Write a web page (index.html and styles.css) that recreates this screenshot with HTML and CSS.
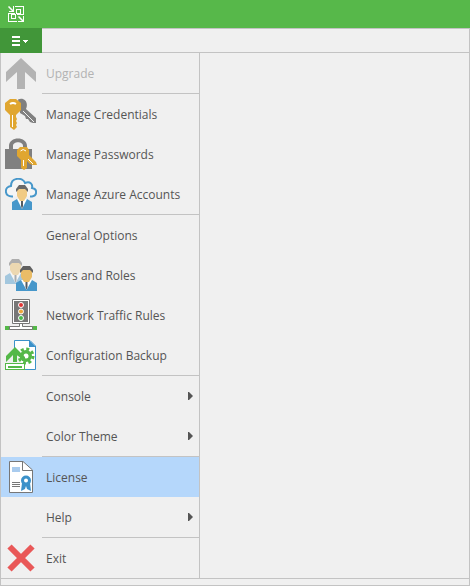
FILE: index.html
```html
<!DOCTYPE html>
<html lang="en">
<head>
<meta charset="utf-8">
<title>Console menu</title>
<link rel="stylesheet" href="styles.css">
</head>
<body>
<div class="window">
  <header class="titlebar">
    <svg class="logo" viewBox="0 0 16 16" fill="none" stroke="#fff" shape-rendering="crispEdges">
      <path d="M7 .5H15.500V9M.5 7V15.500H9M.5 7.500H7M15.500 8.500H9"/>
      <path d="M8.500 3.500h4v4h-4zM3.500 8.500h4v4h-4z"/>
      <path d="M.5 .5L5 5M10.500 10.500L15 15" shape-rendering="auto" stroke-width="1.500"/>
      <path d="M1 5.500H5.500V0M10 15.500H15.500V10"/>
    </svg>
  </header>
  <div class="toolbar">
    <button class="menu-button" type="button" aria-label="Main menu">
      <svg width="18" height="12" viewBox="0 0 18 12" fill="#fff" shape-rendering="crispEdges"><path d="M1 1h8v2H1zM1 5h8v2H1zM1 9h8v2H1zM12 5h5v1h-1v1h-1v1h-1V7h-1V6h-1z"/></svg>
    </button>
  </div>
  <main class="workspace">
    <nav class="menu">
      <button class="item" type="button" disabled>
        <svg class="icon" viewBox="0 0 32 32"><path d="M16 1L31 15V25L20 15V32H12V15L1 25V15z" fill="#b3b3b3"/></svg>
        <span class="label">Upgrade</span>
      </button>
      <hr class="rule">
      <button class="item" type="button">
        <svg class="icon" viewBox="0 0 32 32"><path d="M13 1.500C19-1 24 4 21 11L31 20V25H28L25 24L23 21H21L20 18L15 15z" fill="#808080"/><path d="M18 13L29 24" stroke="#f0f0f0"/><path d="M5 1H11L16 5V12L11 17V19L12 21L11 23L12 25L11 27L12 29L9 32L5 29V17L0 12V5z" fill="#e0a630"/><path d="M7.500 17V29" stroke="#fff"/><path d="M5 6Q8 4 11 6" stroke="#fff" stroke-width="2" fill="none"/></svg>
        <span class="label">Manage Credentials</span>
      </button>
      <button class="item" type="button">
        <svg class="icon" viewBox="0 0 32 32"><path d="M0 11H4V8C4-2 22-2 22 8V11H27V31H0zM8 11H18V8C18 3 8 3 8 8z" fill="#808080" fill-rule="evenodd"/><path d="M15 9H22L24 12V17L31 24L32 27L28 27L25 26L22 23V30L19 32L16 30V22L12 18V12z" fill="#e0a630"/><path d="M15.500 13Q18 10 21 13M18.500 22V28M23 21L28 26" stroke="#fff" fill="none"/></svg>
        <span class="label">Manage Passwords</span>
      </button>
      <button class="item" type="button">
        <svg class="icon" viewBox="0 0 32 32"><path d="M8 18.500H7C-1 18-1 9 6 8C6-1 18-1 20 5C25 3 28 6 27 10C33 11 32 18 27 18.500H25" fill="#fff" fill-opacity=".35" stroke="#4797ca" stroke-width="2"/><path d="M7 32V24L12 21H22L27 24V32z" fill="#4797ca"/><path d="M12 21L17 31L22 21z" fill="#fff"/><path d="M16 23h2v5l-1 3-1-3z" fill="#535b60"/><path d="M12 11L17 7L22 11V18L19 23H15L12 18z" fill="#f1cb84"/><path d="M11 14V11L14 7H20L23 11V14L20 11H14z" fill="#686868"/></svg>
        <span class="label">Manage Azure Accounts</span>
      </button>
      <hr class="rule">
      <button class="item" type="button">
        <span class="icon"></span><span class="label">General Options</span>
      </button>
      <button class="item" type="button">
        <svg class="icon" viewBox="0 0 32 32"><defs><g id="person"><path d="M0 25V17L5 14H16L21 17V25z" fill="#4797ca"/><path d="M5 14L10.500 24L16 14z" fill="#fff"/><path d="M9.500 16h2v5l-1 3-1-3z" fill="#535b60"/><path d="M5 4L10 0L16 4V11L13 16H8L5 11z" fill="#e9bc67"/><path d="M4 7V4L7 0H14L17 4V7L14 4H7z" fill="#606060"/></g></defs><use href="#person" opacity=".45"/><use href="#person" x="11" y="7"/></svg>
        <span class="label">Users and Roles</span>
      </button>
      <button class="item" type="button">
        <svg class="icon" viewBox="0 0 32 32"><path d="M0 27h32v4H0z" fill="#54b848"/><path d="M14.500 24v3.500h-10v3h23v-3h-10V24" fill="#fff" stroke="#777"/><path d="M7.500.5h17v24h-17z" fill="#fff" stroke="#777"/><path d="M9 2h14v21H9z" fill="#777"/><g stroke="#fff"><circle cx="16" cy="6" r="2.500" fill="#df3434"/><circle cx="16" cy="12.500" r="2.500" fill="#eba63a"/><circle cx="16" cy="19" r="2.500" fill="#49b84b"/></g></svg>
        <span class="label">Network Traffic Rules</span>
      </button>
      <button class="item" type="button">
        <svg class="icon" viewBox="0 0 32 32"><path d="M9.500 10V1.500H25L30.500 7V30.500H20" fill="#fff" stroke="#3b91c9"/><path d="M24 1V8H31z" fill="#3b91c9"/><circle cx="21" cy="17" r="6" fill="#54b848"/><circle cx="21" cy="17" r="7" fill="none" stroke="#54b848" stroke-width="3" stroke-dasharray="3 2.500"/><circle cx="21" cy="17" r="2.500" fill="#fff"/><path d="M10 8L20 18V23L12 16V23H8V16L1 23V17z" fill="#54b848"/><path d="M0 24h20v7H0z" fill="#54b848"/><path d="M1 25h18v5H1z" fill="#fff"/><path d="M3 27h14v2H3z" fill="#54b848"/></svg>
        <span class="label">Configuration Backup</span>
      </button>
      <hr class="rule">
      <button class="item" type="button">
        <span class="icon"></span><span class="label">Console</span><svg class="arrow" viewBox="0 0 5 8"><path d="M0 0H1L5 4L1 8H0z"/></svg>
      </button>
      <button class="item" type="button">
        <span class="icon"></span><span class="label">Color Theme</span><svg class="arrow" viewBox="0 0 5 8"><path d="M0 0H1L5 4L1 8H0z"/></svg>
      </button>
      <hr class="rule">
      <button class="item selected" type="button">
        <svg class="icon" viewBox="0 0 32 32"><path d="M4.500.5H18L27.500 9V31.500H4.500z" fill="#fff" stroke="#777"/><path d="M17.500.5V9.500H27.500" fill="none" stroke="#777"/><path d="M7 6h8v5H7z" fill="#a9cbee"/><path d="M7 21.500h8M7 23.500h8M7 25.500h8" stroke="#777"/><path d="M17 22L16 30L20 28L21 25L22 28L26 30L25 22z" fill="#3b91c9"/><circle cx="21" cy="19.500" r="3.500" fill="#fff" stroke="#3b91c9" stroke-width="3"/></svg>
        <span class="label">License</span>
      </button>
      <button class="item" type="button">
        <span class="icon"></span><span class="label">Help</span><svg class="arrow" viewBox="0 0 5 8"><path d="M0 0H1L5 4L1 8H0z"/></svg>
      </button>
      <hr class="rule">
      <button class="item" type="button">
        <svg class="icon" viewBox="0 0 32 32"><path d="M4.500 4.500L27.500 27.500M27.500 4.500L4.500 27.500" stroke="#e95858" stroke-width="6"/></svg>
        <span class="label">Exit</span>
      </button>
    </nav>
    <section class="content"></section>
  </main>
  <footer class="statusbar"></footer>
</div>
</body>
</html>
```
FILE: styles.css
```css
* { box-sizing: border-box; }
body { margin: 0; background: #f0f0f0; font: 12px/16px "Open Sans", "Noto Sans", sans-serif; color: #555; }
.window { min-height: 100vh; display: flex; flex-direction: column; }
.titlebar { height: 28px; padding: 6px 8px; background: #57b84a; }
.logo { display: block; width: 16px; height: 16px; }
.toolbar { height: 25px; display: flex; border: 1px solid #c3c3c3; border-left: 0; background: #f0f0f0; }
.menu-button { width: 42px; margin: -1px 0; padding: 0 2px 0 0; border: 0; background: #419639; display: flex; align-items: center; justify-content: center; }
.workspace { flex: 1; display: flex; border: 1px solid #c3c3c3; border-top: 0; }
.menu { width: 199px; border-right: 1px solid #c3c3c3; }
.item { display: flex; align-items: center; width: 100%; height: 40px; padding: 0 6px 0 4px; border: 0; background: none; font: inherit; color: inherit; text-align: left; }
.item:disabled { color: #b3b3b3; }
.item.selected { background: #b5d7fb; }
.icon { flex: none; width: 32px; height: 32px; margin-right: 9px; }
.label { flex: 1; padding-top: 2px; white-space: nowrap; }
.arrow { width: 5px; height: 8px; fill: #555; }
.rule { height: 1px; margin: 0 0 0 41px; border: 0; background: #c3c3c3; }
.content { flex: 1; }
.statusbar { height: 7px; border: 1px solid #c3c3c3; border-top: 0; }
```
